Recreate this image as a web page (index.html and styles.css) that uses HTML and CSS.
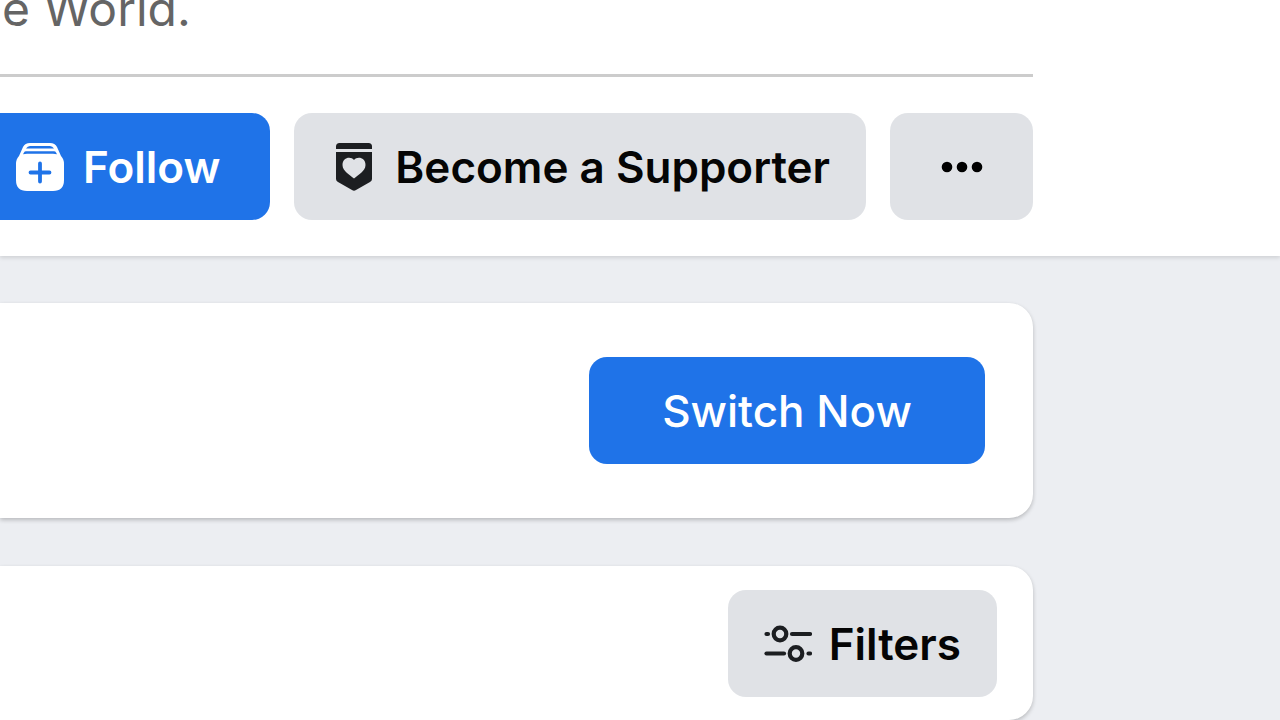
FILE: index.html
```
<!DOCTYPE html>
<html lang="en">
<head>
    <meta charset="UTF-8">
    <meta name="viewport" content="width=device-width, initial-scale=1.0">
    <title>Page</title>
    <link rel="stylesheet" href="styles.css">
</head>
<body>
    <header class="header">
        <div class="column">
            <p class="tagline">e World.</p>
            <div class="actions">
                <button type="button" class="btn btn-primary btn-follow">
                    <svg class="icon" viewBox="0 0 48 48" aria-hidden="true">
                        <path fill="#fff" d="M14 0 H34 Q39 0 41 4 L45 13 Q48 16 48 21 V37 Q48 48 37 48 H11 Q0 48 0 37 V21 Q0 16 3 13 L7 4 Q9 0 14 0 Z"/>
                        <path fill="#1f73e8" d="M10 5.500 Q11.500 3 14 3 H34 Q36.500 3 38 5.500 Z"/>
                        <path fill="#1f73e8" d="M7 11.300 L8 9.500 Q8.500 8.200 10 8.200 H38 Q39.500 8.200 40 9.500 L41 11.300 Q39 10.700 37 10.700 H11 Q9 10.700 7 11.300 Z"/>
                        <path d="M24 20.500 V38.500 M14.500 29.500 H33.500" stroke="#1f73e8" stroke-width="3.800" stroke-linecap="round"/>
                    </svg>
                    Follow
                </button>
                <button type="button" class="btn">
                    <svg class="icon" viewBox="0 0 48 48" aria-hidden="true">
                        <path fill="#1c1e21" d="M6 6 V3.500 Q6 0 9.500 0 H38.500 Q42 0 42 3.500 V6 Z"/>
                        <path fill="#1c1e21" fill-rule="evenodd" d="M6 9 H42 V36 Q42 38 40 39 L26 47 Q24 48.500 22 47 L8 39 Q6 38 6 36 Z M24 17 C21 13 12.500 14 12.500 22 C12.500 28 20 32 24 35.500 C28 32 35.500 28 35.500 22 C35.500 14 27 13 24 17 Z"/>
                    </svg>
                    Become a Supporter
                </button>
                <button type="button" class="btn btn-more" aria-label="More options">
                    <svg class="icon" viewBox="0 0 48 48" aria-hidden="true">
                        <circle cx="9" cy="24" r="5.300"/>
                        <circle cx="24" cy="24" r="5.300"/>
                        <circle cx="39" cy="24" r="5.300"/>
                    </svg>
                </button>
            </div>
        </div>
    </header>

    <main class="column">
        <section class="card card-switch">
            <button type="button" class="btn btn-primary btn-switch">Switch Now</button>
        </section>
        <section class="card card-filters">
            <button type="button" class="btn">
                <svg class="icon" viewBox="0 0 48 48" aria-hidden="true">
                    <g fill="none" stroke="#1c1e21" stroke-width="4.200" stroke-linecap="round">
                        <path d="M2.500 14 H4"/>
                        <circle cx="16" cy="14" r="6.300"/>
                        <path d="M28 14 H46"/>
                        <path d="M2.500 33.500 H20"/>
                        <circle cx="32" cy="33.500" r="6.300"/>
                        <path d="M44.500 33.500 H46"/>
                    </g>
                </svg>
                Filters
            </button>
        </section>
    </main>
</body>
</html>
```

FILE: styles.css
```
* {
    box-sizing: border-box;
}
body {
    font-family: Inter, "Liberation Sans", sans-serif;
    background: #eceef2;
    color: #050505;
    margin: 0;
}
.column {
    margin-right: 247px;
}
.header {
    background: #fff;
    padding-bottom: 36px;
    margin-bottom: 47px;
    overflow: hidden;
    box-shadow: 0 2px 4px rgba(0, 0, 0, 0.12);
}
.tagline {
    margin: -20px 0 36px;
    padding: 0 0 36px 2px;
    border-bottom: 3px solid #ccc;
    font-size: 48px;
    line-height: 58px;
    color: #656565;
}
.actions {
    display: flex;
    justify-content: flex-end;
    gap: 24px;
}
.btn {
    display: flex;
    align-items: center;
    justify-content: center;
    gap: 17px;
    height: 107px;
    padding: 0 36px;
    border: none;
    border-radius: 18px;
    background: #e0e2e6;
    color: #050505;
    font-family: inherit;
    font-size: 44px;
    font-weight: 600;
    white-space: nowrap;
    cursor: pointer;
}
.btn-primary {
    background: #1f73e8;
    color: #fff;
}
.btn-follow {
    flex: 1;
    justify-content: flex-end;
    gap: 19px;
    padding: 0 50px 0 0;
    border-radius: 0 18px 18px 0;
}
.btn-more {
    min-width: 143px;
}
.btn-switch {
    min-width: 396px;
    font-weight: 500;
}
.icon {
    width: 48px;
    height: 48px;
    flex: none;
}
.card {
    display: flex;
    justify-content: flex-end;
    background: #fff;
    border-radius: 0 24px 24px 0;
    box-shadow: 0 2px 4px rgba(0, 0, 0, 0.22);
}
.card + .card {
    margin-top: 48px;
}
.card-switch {
    padding: 54px 48px;
}
.card-filters {
    padding: 24px 36px 23px;
}
```
